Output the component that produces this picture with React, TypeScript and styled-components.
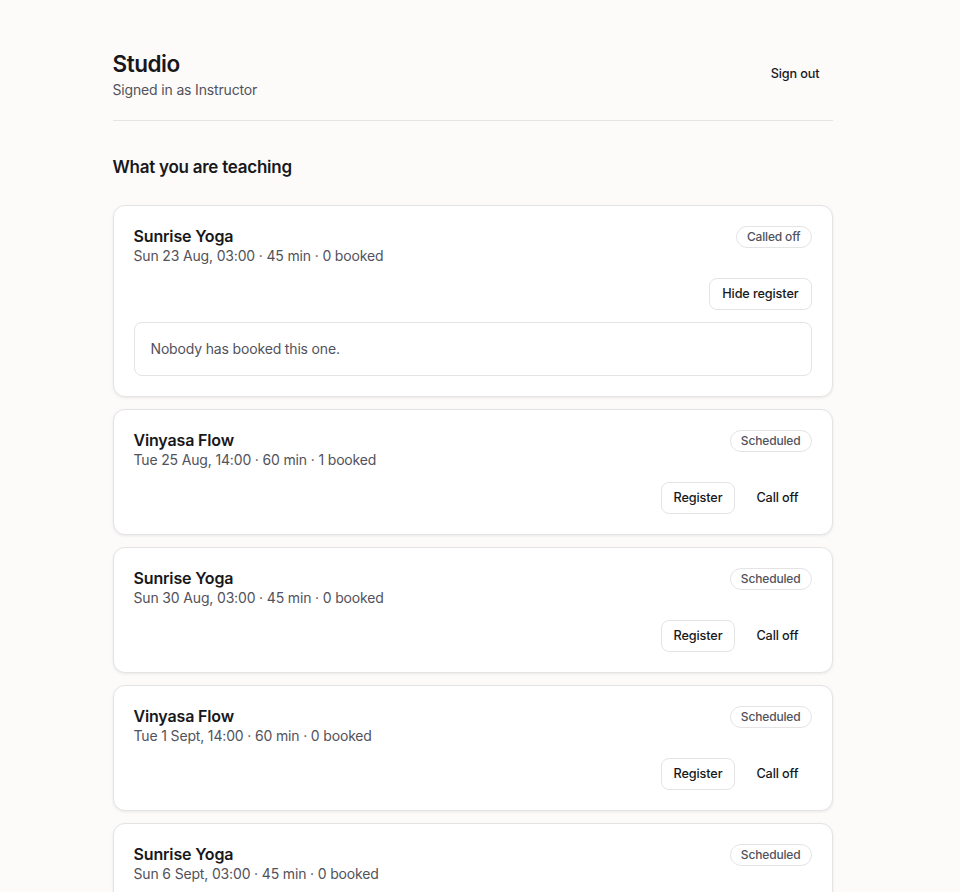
import styled, { createGlobalStyle } from "styled-components";

const GlobalStyle = createGlobalStyle`
  html, body {
    margin: 0;
    padding: 0;
    background: #fcfbfa;
  }
  body {
    font-family: Inter, "Noto Sans", sans-serif;
    color: #18181b;
    letter-spacing: -0.01em;
    -webkit-font-smoothing: antialiased;
    padding-right: 15px;
  }
`;

const Page = styled.main`
  max-width: 720px;
  margin: 0 auto;
  padding: 48px 0 48px;
`;

const Header = styled.header`
  display: flex;
  align-items: center;
  justify-content: space-between;
  padding-bottom: 20px;
  border-bottom: 1px solid #e4e4e7;
`;

const Brand = styled.div`
  display: flex;
  flex-direction: column;
`;

const Title = styled.h1`
  margin: 0;
  font-size: 22.5px;
  line-height: 32px;
  font-weight: 600;
  letter-spacing: -0.02em;
`;

const Subtitle = styled.p`
  margin: 0;
  font-size: 14px;
  line-height: 20px;
  color: #52525b;
`;

const SectionTitle = styled.h2`
  margin: 34px 0 26px;
  font-size: 17px;
  line-height: 24px;
  font-weight: 600;
  letter-spacing: -0.015em;
`;

const List = styled.div`
  display: flex;
  flex-direction: column;
  gap: 12px;
`;

const Card = styled.article`
  background: #fff;
  border: 1px solid #e4e4e7;
  border-radius: 12px;
  box-shadow: 0 1px 3px rgba(0, 0, 0, 0.08);
  padding: 20px;
  display: flex;
  flex-direction: column;
  gap: 12px;
`;

const CardTop = styled.div`
  display: flex;
  align-items: flex-start;
  justify-content: space-between;
`;

const ClassInfo = styled.div`
  display: flex;
  flex-direction: column;
`;

const ClassName = styled.h3`
  margin: 0;
  font-size: 16px;
  line-height: 20px;
  font-weight: 600;
`;

const Meta = styled.p`
  margin: 0;
  font-size: 14px;
  line-height: 20px;
  color: #52525b;
`;

const Badge = styled.span`
  font-size: 12px;
  line-height: 16px;
  font-weight: 500;
  color: #52525b;
  border: 1px solid #e4e4e7;
  border-radius: 999px;
  padding: 2px 10px;
`;

const Actions = styled.div`
  display: flex;
  justify-content: flex-end;
  gap: 8px;
`;

const Button = styled.button<{ $ghost?: boolean }>`
  font-family: inherit;
  font-size: 12.7px;
  font-weight: 500;
  line-height: 18px;
  letter-spacing: -0.01em;
  color: #18181b;
  background: ${(p) => (p.$ghost ? "transparent" : "#fff")};
  border: 1px solid ${(p) => (p.$ghost ? "transparent" : "#e4e4e7")};
  border-radius: 8px;
  padding: 6px 12px;
  cursor: pointer;
`;

const RegisterBox = styled.div`
  border: 1px solid #e4e4e7;
  border-radius: 8px;
  padding: 16px;
  font-size: 14px;
  line-height: 20px;
  color: #52525b;
`;

type Session = {
  name: string;
  when: string;
  length: number;
  booked: number;
  status: "Scheduled" | "Called off";
  open?: boolean;
};

const sessions: Session[] = [
  { name: "Sunrise Yoga", when: "Sun 23 Aug, 03:00", length: 45, booked: 0, status: "Called off", open: true },
  { name: "Vinyasa Flow", when: "Tue 25 Aug, 14:00", length: 60, booked: 1, status: "Scheduled" },
  { name: "Sunrise Yoga", when: "Sun 30 Aug, 03:00", length: 45, booked: 0, status: "Scheduled" },
  { name: "Vinyasa Flow", when: "Tue 1 Sept, 14:00", length: 60, booked: 0, status: "Scheduled" },
  { name: "Sunrise Yoga", when: "Sun 6 Sept, 03:00", length: 45, booked: 0, status: "Scheduled" },
  { name: "Vinyasa Flow", when: "Tue 8 Sept, 14:00", length: 60, booked: 0, status: "Scheduled" },
  { name: "Sunrise Yoga", when: "Sun 13 Sept, 03:00", length: 45, booked: 0, status: "Scheduled" },
  { name: "Vinyasa Flow", when: "Tue 15 Sept, 14:00", length: 60, booked: 0, status: "Scheduled" },
  { name: "Sunrise Yoga", when: "Sun 20 Sept, 03:00", length: 45, booked: 0, status: "Scheduled" },
  { name: "Vinyasa Flow", when: "Tue 22 Sept, 14:00", length: 60, booked: 0, status: "Scheduled" },
  { name: "Sunrise Yoga", when: "Sun 27 Sept, 03:00", length: 45, booked: 0, status: "Scheduled" },
  { name: "Vinyasa Flow", when: "Tue 29 Sept, 14:00", length: 60, booked: 0, status: "Scheduled" },
];

function SessionCard({ s }: { s: Session }) {
  const cancelled = s.status === "Called off";
  return (
    <Card>
      <CardTop>
        <ClassInfo>
          <ClassName>{s.name}</ClassName>
          <Meta>
            {s.when} · {s.length} min · {s.booked} booked
          </Meta>
        </ClassInfo>
        <Badge>{s.status}</Badge>
      </CardTop>
      <Actions>
        <Button>{s.open ? "Hide register" : "Register"}</Button>
        {!cancelled && <Button $ghost>Call off</Button>}
      </Actions>
      {s.open && <RegisterBox>Nobody has booked this one.</RegisterBox>}
    </Card>
  );
}

export default function App() {
  return (
    <>
      <GlobalStyle />
      <Page>
        <Header>
          <Brand>
            <Title>Studio</Title>
            <Subtitle>Signed in as Instructor</Subtitle>
          </Brand>
          <Button $ghost>Sign out</Button>
        </Header>
        <SectionTitle>What you are teaching</SectionTitle>
        <List>
          {sessions.map((s, i) => (
            <SessionCard key={i} s={s} />
          ))}
        </List>
      </Page>
    </>
  );
}
